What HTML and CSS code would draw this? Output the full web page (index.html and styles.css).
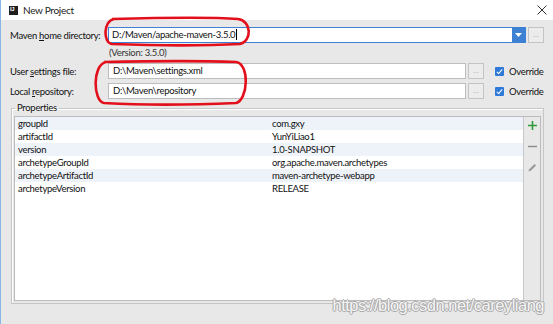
FILE: index.html
```html
<!DOCTYPE html>
<html lang="en">

<head>
    <meta charset="UTF-8">
    <title>New Project</title>
    <link rel="stylesheet" href="styles.css">
</head>

<body>
    <div class="window">
        <div class="titlebar">
            <span class="app-icon">IJ</span>
            <span class="title">New Project</span>
            <svg class="close" width="10" height="10" viewBox="0 0 10 10">
                <path d="M0.5 0.5 L9.5 9.5 M9.5 0.5 L0.5 9.5" stroke="#333" stroke-width="1" fill="none" />
            </svg>
        </div>

        <div class="content">
            <div class="row row-home">
                <label class="label">Maven <u>h</u>ome directory:</label>
                <div class="combo">
                    <span class="combo-text">D:/Maven/apache-maven-3.5.0<span class="caret"></span></span>
                    <span class="combo-arrow">
                        <svg width="7" height="4" viewBox="0 0 7 4"><path d="M0 0 L7 0 L3.5 4 Z" fill="#fff" /></svg>
                    </span>
                </div>
                <button class="browse">...</button>
            </div>

            <div class="version">(Version: 3.5.0)</div>

            <div class="row">
                <label class="label">User <u>s</u>ettings file:</label>
                <div class="field">D:\Maven\settings.xml</div>
                <button class="browse">...</button>
                <label class="override"><span class="check"></span>Override</label>
            </div>

            <div class="row">
                <label class="label">Local <u>r</u>epository:</label>
                <div class="field">D:\Maven\repository</div>
                <button class="browse">...</button>
                <label class="override"><span class="check"></span>Override</label>
            </div>

            <fieldset class="props">
                <legend>Properties</legend>
                <div class="decorator">
                    <table class="prop-table">
                        <tbody id="propsBody"></tbody>
                    </table>
                    <div class="toolbar">
                        <svg width="9" height="9" viewBox="0 0 9 9">
                            <path d="M4.5 0 V9 M0 4.5 H9" stroke="#2f9a3a" stroke-width="1.6" />
                        </svg>
                        <svg width="9" height="9" viewBox="0 0 9 9">
                            <path d="M0 4.5 H9" stroke="#8a8a8a" stroke-width="1.4" />
                        </svg>
                        <svg width="9" height="9" viewBox="0 0 9 9">
                            <path d="M0.5 8.5 L1.2 6.2 L6.5 0.9 L8.1 2.5 L2.8 7.8 Z" fill="#9a9a9a" />
                        </svg>
                    </div>
                </div>
            </fieldset>
        </div>

        <svg class="marks" width="553" height="324" viewBox="0 0 553 324">
            <path d="M112 19 C150 18 210 17 238 19 C252 21 252 41 240 44 C200 46 140 45 112 44 C103 43 103 21 114 19"
                stroke="#e3101c" stroke-width="2.6" fill="none" />
            <path d="M104 62 C150 61 210 61 236 62 C250 64 248 100 236 103 C190 105 140 105 104 103 C93 101 92 65 106 62"
                stroke="#e3101c" stroke-width="2.6" fill="none" />
        </svg>

        <div class="watermark">https://blog.csdn.net/careyliang</div>
    </div>

    <script>
        const props = [
            ['groupId', 'com.gxy'],
            ['artifactId', 'YunYiLiao1'],
            ['version', '1.0-SNAPSHOT'],
            ['archetypeGroupId', 'org.apache.maven.archetypes'],
            ['archetypeArtifactId', 'maven-archetype-webapp'],
            ['archetypeVersion', 'RELEASE']
        ];
        const propsBody = document.getElementById('propsBody');
        props.forEach(p => {
            const tr = document.createElement('tr');
            tr.innerHTML = `<td>${p[0]}</td><td>${p[1]}</td>`;
            propsBody.appendChild(tr);
        });
    </script>
</body>

</html>
```

FILE: styles.css
```css
* {
    box-sizing: border-box;
}

body {
    margin: 0;
    font-family: Lato, "Noto Sans", sans-serif;
    font-size: 9.5px;
    letter-spacing: -0.3px;
    color: #111;
    white-space: nowrap;
}

.window {
    position: relative;
    width: 553px;
    height: 324px;
    background-color: #e8e8e8;
    border-left: 1px solid #8ab6e6;
    overflow: hidden;
}

.titlebar {
    display: flex;
    align-items: center;
    height: 20px;
    padding-left: 8px;
    background-color: #fff;
}

.app-icon {
    width: 9px;
    height: 9px;
    background-color: #1e1e1e;
    color: #fff;
    font-family: "Liberation Sans", sans-serif;
    font-size: 6px;
    font-weight: bold;
    line-height: 7px;
    padding-left: 1px;
    letter-spacing: -0.5px;
}

.title {
    margin-left: 5px;
    font-size: 10px;
    color: #222;
}

.close {
    margin-left: auto;
    margin-right: 6px;
}

.content {
    padding: 7px 9px 0 9px;
}

.row {
    display: flex;
    align-items: center;
    height: 16px;
    margin-bottom: 4px;
}

.label {
    width: 98px;
    flex-shrink: 0;
}

.combo {
    flex: 1;
    display: flex;
    height: 16px;
    background-color: #fff;
    border: 1px solid #3d80d4;
}

.combo-text {
    flex: 1;
    padding-left: 3px;
    line-height: 14px;
}

.caret {
    display: inline-block;
    width: 1px;
    height: 11px;
    background-color: #000;
    vertical-align: -2px;
    margin-left: 1px;
}

.combo-arrow {
    width: 13px;
    display: flex;
    align-items: center;
    justify-content: center;
    background-color: #3d80d4;
}

.field {
    flex: 1;
    height: 16px;
    padding-left: 4px;
    line-height: 14px;
    background-color: #fff;
    border: 1px solid #bdbdbd;
}

.browse {
    width: 16px;
    height: 16px;
    margin-left: 2px;
    padding: 0;
    border: 1px solid #c4c4c4;
    background-color: #ececec;
    color: #9a9a9a;
    font-size: 7px;
    line-height: 8px;
}

.override {
    display: flex;
    align-items: center;
    width: 60px;
    padding-left: 11px;
}

.check {
    flex-shrink: 0;
    width: 9px;
    height: 9px;
    margin-right: 5px;
    border-radius: 1px;
    background-color: #2f7ad8;
    position: relative;
}

.check::after {
    content: "";
    position: absolute;
    left: 3px;
    top: 1px;
    width: 2px;
    height: 5px;
    border: solid #fff;
    border-width: 0 1.5px 1.5px 0;
    transform: rotate(40deg);
}

.version {
    padding-left: 99px;
    height: 12px;
    line-height: 11px;
    margin-bottom: 4px;
    color: #333;
}

.props {
    margin: 0 0 0 1px;
    padding: 0 2px 2px 2px;
    width: 533px;
    height: 201px;
    border: 1px solid #c6c6c6;
    box-shadow: inset 1px 1px 0 #fff;
}

.props legend {
    padding: 0 2px;
    margin-left: 1px;
    line-height: 10px;
}

.decorator {
    display: flex;
    height: 185px;
    margin-top: 3px;
    border: 1px solid #bcbcbc;
}

.prop-table {
    width: 509px;
    height: 100%;
    align-self: flex-start;
    border-collapse: collapse;
    background-color: #fff;
    border-right: 1px solid #c8c8c8;
}

.prop-table td {
    height: 13px;
    padding: 0 0 0 3px;
    line-height: 12px;
}

.prop-table tr:nth-child(odd) td {
    background-color: #eef3fa;
}

.prop-table td:first-child {
    width: 254px;
}

.prop-table tbody::after {
    content: "";
    display: table-row;
}

.toolbar {
    flex: 1;
    display: flex;
    flex-direction: column;
    align-items: center;
    gap: 12px;
    padding-top: 4px;
}

.marks {
    position: absolute;
    left: -1px;
    top: 0;
    pointer-events: none;
}

.watermark {
    position: absolute;
    right: 9px;
    bottom: 9px;
    font-family: "Liberation Sans", sans-serif;
    font-size: 16.5px;
    letter-spacing: -0.5px;
    color: rgba(255, 255, 255, 0.9);
    text-shadow: 1px 0 0 #aaa, -1px 0 0 #aaa, 0 1px 0 #aaa, 0 -1px 0 #aaa;
}
```
